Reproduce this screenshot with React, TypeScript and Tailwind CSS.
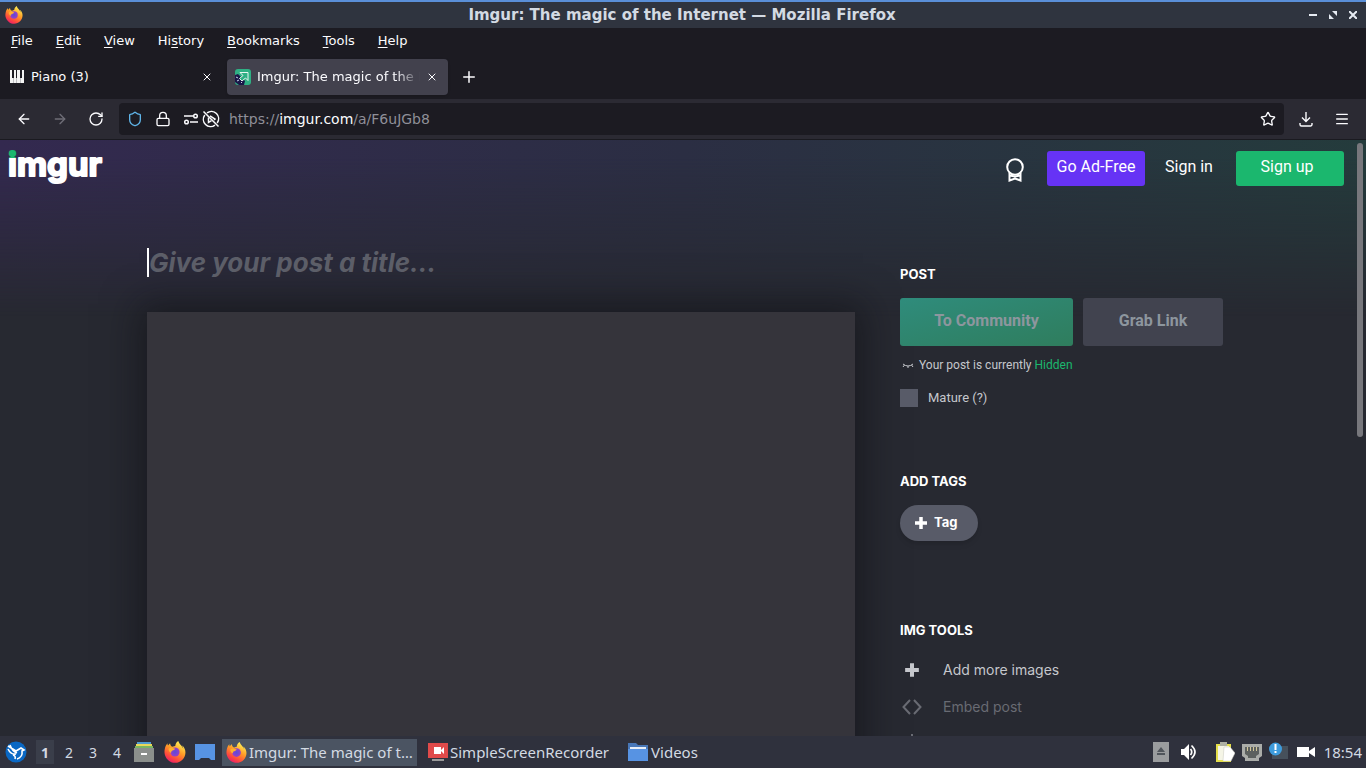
import type { ReactNode } from 'react';
import {
  ArrowLeft,
  ArrowRight,
  Lock,
  Menu,
  Plus,
  RotateCw,
  Shield,
  Star,
  X,
} from 'lucide-react';

const menus = [
  { before: '', key: 'F', after: 'ile' },
  { before: '', key: 'E', after: 'dit' },
  { before: '', key: 'V', after: 'iew' },
  { before: 'Hi', key: 's', after: 'tory' },
  { before: '', key: 'B', after: 'ookmarks' },
  { before: '', key: 'T', after: 'ools' },
  { before: '', key: 'H', after: 'elp' },
];

function FirefoxIcon({ className }: { className: string }) {
  return (
    <svg className={className} viewBox="0 0 24 24" aria-hidden="true">
      <defs>
        <linearGradient id="fox-body" x1="0.8" y1="0" x2="0.25" y2="1">
          <stop offset="0.1" stopColor="#ffe850" />
          <stop offset="0.45" stopColor="#ff9a26" />
          <stop offset="0.75" stopColor="#ff4b3c" />
          <stop offset="1" stopColor="#e8176f" />
        </linearGradient>
        <radialGradient id="fox-globe">
          <stop offset="0" stopColor="#5a4bd8" />
          <stop offset="1" stopColor="#9a3fc4" />
        </radialGradient>
      </defs>
      <path
        fill="url(#fox-body)"
        d="M22.5 8.5c-.6-1.500-1.800-3-2.800-3.500.8 1.500 1.200 2.500 1.300 3.400C19.400 4.500 16.500 3.500 15.600 0c-2.500 1.400-3.200 3.900-3.300 5.400-1 .1-2 .4-2.800.9C8 6 6.800 4.700 6.700 2.600 5.800 3 5 4 4.400 5c-.6-.8-.6-2-.5-2.500C2.300 4 1.300 6.200.9 8.500.3 11.300.4 13.700 1.300 16c1.700 4.600 6 7.800 10.800 7.800 6.300 0 11.300-5 11.300-11.300 0-1.400-.3-2.800-.9-4z"
      />
      <circle cx="12" cy="12" r="5" fill="url(#fox-globe)" />
      <path
        fill="#ffb02e"
        d="M5 8.500c1.500-1.400 3.500-1.500 5-.6 1 .2 2 .2 2.200.6.1.7-1.600 1.200-2 1.700-1.500.3-2.700 1.300-2.500 3C6 12.200 4.800 10.500 5 8.500z"
      />
    </svg>
  );
}

function PianoIcon() {
  return (
    <svg className="h-4 w-4" viewBox="0 0 16 16" aria-hidden="true">
      <path fill="#f4f4f4" d="M1 1h14v13H1z" />
      <path fill="#1c1b22" d="M3 1h2v8H3zM7 1h1v8H7zM11 1h2v8h-2z" />
      <path fill="#8a898f" d="M4 9h.5v5H4zM7.500 9H8v5h-.5zM11.500 9h.5v5h-.5z" />
    </svg>
  );
}

function ImgurFavicon() {
  return (
    <svg className="h-4 w-4" viewBox="0 0 16 16" aria-hidden="true">
      <rect width="16" height="16" rx="3" fill="#2fb084" />
      <path fill="#1a1748" d="M0 6l3-1 7 7-1 4H4l-4-3z" />
      <path fill="#2fb084" stroke="#e8f5f0" d="M5 3.500h8v8L10.500 9 7 12 4.500 9.500 8 6.500z" />
      <path fill="none" stroke="#c9d8e8" d="M1 8l2 1M2 12l2-1M6 14l1-1" />
    </svg>
  );
}

function PermissionsIcon() {
  return (
    <svg className="h-4 w-4" viewBox="0 0 16 16" fill="none" stroke="#fbfbfe" strokeWidth="1.500" aria-hidden="true">
      <path d="M1 5h9M7 11h8" />
      <circle cx="12.500" cy="5" r="1.800" />
      <circle cx="3.500" cy="11" r="1.800" />
    </svg>
  );
}

function AutoplayBlockedIcon() {
  return (
    <svg className="h-[18px] w-[18px]" viewBox="0 0 18 18" fill="none" stroke="#fbfbfe" strokeWidth="1.500" aria-hidden="true">
      <path d="M5 2.800A7.300 7.300 0 0 1 15.200 13M13 15.200A7.300 7.300 0 0 1 2.800 5M1.500 1.500l15 15" />
      <path d="M8 5.800l5 3.200-1 .8M6.500 7.500v5l3-1.800" />
    </svg>
  );
}

function DownloadIcon() {
  return (
    <svg className="h-4 w-4" viewBox="0 0 16 16" fill="none" stroke="#fbfbfe" strokeWidth="1.400" aria-hidden="true">
      <path d="M8 1v9M4 6.500l4 4 4-4M2 12v1.500a1.500 1.500 0 0 0 1.500 1.500h9a1.500 1.500 0 0 0 1.500-1.500V12" />
    </svg>
  );
}

function TitleBar() {
  return (
    <header className="flex h-7 shrink-0 items-center border-t-2 border-[#5a8fd8] bg-[#2f343f] px-1">
      <div className="flex-1 pl-px">
        <FirefoxIcon className="h-[18px] w-[18px]" />
      </div>
      <h1 className="text-center text-[15px] leading-5 font-bold whitespace-nowrap text-[#d3dae3]">
        Imgur: The magic of the Internet — Mozilla Firefox
      </h1>
      <div className="flex flex-1 items-center justify-end gap-2 pr-[3px]">
        <button type="button" aria-label="Minimize" className="flex h-3 w-3 items-center justify-center">
          <svg className="h-2 w-2" viewBox="0 0 8 8"><path fill="#e6ebf2" d="M0 3h8v2H0z" /></svg>
        </button>
        <button type="button" aria-label="Restore" className="flex h-3 w-3 items-center justify-center">
          <svg className="h-2 w-2" viewBox="0 0 8 8"><path fill="#e6ebf2" d="M3 0h5v5zM0 3v5h5z" /></svg>
        </button>
        <button type="button" aria-label="Close window" className="flex h-3 w-3 items-center justify-center">
          <svg className="h-2 w-2" viewBox="0 0 8 8"><path stroke="#e6ebf2" strokeWidth="2" d="M0 0l8 8M8 0L0 8" /></svg>
        </button>
      </div>
    </header>
  );
}

function MenuBar() {
  return (
    <nav aria-label="Application menu" className="flex h-[26px] shrink-0 items-center gap-[23px] px-[11px] text-[13px]">
      {menus.map((m) => (
        <button key={m.after} type="button">
          {m.before}
          <span className="underline underline-offset-2">{m.key}</span>
          {m.after}
        </button>
      ))}
    </nav>
  );
}

function TabStrip() {
  return (
    <div className="flex h-[45px] shrink-0 items-center text-[13px]">
      <div className="flex h-9 w-[223px] items-center gap-1.5 pr-[10px] pl-[9px]">
        <PianoIcon />
        <span className="flex-1">Piano (3)</span>
        <button type="button" aria-label="Close Piano tab">
          <X className="h-3 w-3" strokeWidth={2} />
        </button>
      </div>
      <div className="ml-1 flex h-9 w-[221px] items-center gap-1.5 rounded-sm bg-[#42414d] pr-[10px] pl-2 shadow">
        <ImgurFavicon />
        <span className="flex-1 overflow-hidden mask-r-from-85% whitespace-nowrap">
          Imgur: The magic of the Internet
        </span>
        <button type="button" aria-label="Close Imgur tab">
          <X className="h-3 w-3" strokeWidth={2} />
        </button>
      </div>
      <button type="button" aria-label="New tab" className="ml-3">
        <Plus className="h-[18px] w-[18px]" strokeWidth={2} />
      </button>
    </div>
  );
}

function AddressBar() {
  return (
    <div className="flex h-[41px] shrink-0 items-center border-b border-[#1a1a20] bg-[#2b2a33] px-4">
      <div className="flex w-[103px] items-center gap-5">
        <button type="button" aria-label="Back"><ArrowLeft className="h-4 w-4" /></button>
        <button type="button" aria-label="Forward" className="text-[#6f6e77]"><ArrowRight className="h-4 w-4" /></button>
        <button type="button" aria-label="Reload"><RotateCw className="h-4 w-4" /></button>
      </div>
      <div className="flex h-8 flex-1 items-center rounded bg-[#1c1b22] px-2">
        <Shield className="mr-3 h-4 w-4 text-[#5fb4e8]" strokeWidth={2} />
        <Lock className="mr-3 h-4 w-4" />
        <PermissionsIcon />
        <span className="ml-[3px]"><AutoplayBlockedIcon /></span>
        <a href="https://imgur.com/a/F6uJGb8" className="ml-[9px] flex-1 text-[14px] text-[#8f8f98]">
          https://<span className="text-[#fbfbfe]">imgur.com</span>/a/F6uJGb8
        </a>
        <button type="button" aria-label="Bookmark this page"><Star className="h-4 w-4" /></button>
      </div>
      <button type="button" aria-label="Downloads" className="ml-[14px]"><DownloadIcon /></button>
      <button type="button" aria-label="Open application menu" className="ml-5"><Menu className="h-4 w-4" /></button>
    </div>
  );
}

function ImgurLogo() {
  return (
    <a href="/" aria-label="Imgur home">
      <svg className="h-9 w-[98px] overflow-visible" viewBox="0 0 98 36">
        <defs>
          <linearGradient id="logo-i" gradientUnits="userSpaceOnUse" x1="0" y1="0" x2="0" y2="36">
            <stop offset="0.23" stopColor="#1bb76e" />
            <stop offset="0.23" stopColor="#fff" />
          </linearGradient>
        </defs>
        <text
          x="0"
          y="26"
          fontSize="33"
          fontWeight="700"
          fontFamily="Inter, sans-serif"
          fill="#fff"
          stroke="#fff"
          strokeWidth="2"
          strokeLinejoin="round"
        >
          <tspan fill="url(#logo-i)" stroke="url(#logo-i)">i</tspan>mgur
        </text>
      </svg>
    </a>
  );
}

function SiteHeader() {
  return (
    <div className="flex h-14 items-center justify-between pr-[22px] pl-2">
      <ImgurLogo />
      <div className="flex items-center text-[16px] text-white">
        <button type="button" aria-label="Emerald" className="mt-1 mr-[22px]">
          <svg className="h-6 w-5" viewBox="0 0 20 24" fill="none" stroke="#fff" strokeWidth="2">
            <circle cx="10" cy="9" r="7.800" />
            <path d="M4.500 15v7.500l5.500-2 5.500 2V15M4.500 17.500l5.500 1 5.500-1" />
          </svg>
        </button>
        <a href="/emerald" className="flex h-[35px] w-[98px] items-center justify-center rounded-[3px] bg-[#6633f5] pb-0.5">Go Ad-Free</a>
        <a href="/signin" className="mx-5 w-[51px] pb-0.5 whitespace-nowrap">Sign in</a>
        <a href="/register" className="flex h-[35px] w-[108px] items-center justify-center rounded-[3px] bg-[#1bb76e] pr-1.5 pb-0.5">Sign up</a>
      </div>
    </div>
  );
}

function PlusGlyph({ className }: { className: string }) {
  return (
    <svg className={className} viewBox="0 0 14 14" aria-hidden="true">
      <path stroke="currentColor" strokeWidth="3.500" d="M7 1v12M1 7h12" />
    </svg>
  );
}

function SectionTitle({ children }: { children: ReactNode }) {
  return <h2 className="font-[Inter,sans-serif] text-[13px] leading-4 font-bold text-white">{children}</h2>;
}

function PostSidebar() {
  return (
    <aside className="w-[323px] shrink-0 pt-[70px] text-[#c5c7cc]">
      <SectionTitle>POST</SectionTitle>
      <div className="mt-4 flex gap-2.5 text-[16px] font-bold text-[#8d969e]">
        <button type="button" className="h-12 w-[173px] rounded-[3px] bg-linear-to-br from-[#2f8c7c] to-[#2f7d5d] pb-0.5">To Community</button>
        <button type="button" className="h-12 flex-1 rounded-[3px] bg-[#41434f] pb-0.5">Grab Link</button>
      </div>
      <p className="mt-[11px] flex items-center pl-0.5 text-[12px] leading-4">
        <svg className="mr-[5px] h-3 w-3" viewBox="0 0 12 12" fill="none" stroke="currentColor" aria-hidden="true">
          <path d="M1 5q5 4 10 0M2.500 6L1 8M6 7v2M9.500 6L11 8" />
        </svg>
        <span>Your post is currently <a href="#privacy" className="text-[#1bb76e]">Hidden</a></span>
      </p>
      <label className="mt-4 flex items-center gap-2.5 text-[13px] leading-[18px]">
        <input type="checkbox" className="h-[18px] w-[18px] appearance-none bg-[#585b68]" />
        Mature (?)
      </label>

      <div className="mt-[66px]">
        <SectionTitle>ADD TAGS</SectionTitle>
        <button type="button" className="mt-4 flex h-9 w-[78px] items-center gap-1.5 rounded-full bg-[#585b68] pl-[14px] font-[Inter,sans-serif] text-[13px] font-bold text-white shadow-md">
          <PlusGlyph className="h-[14px] w-[14px]" />
          Tag
        </button>
      </div>

      <div className="mt-[81px]">
        <SectionTitle>IMG TOOLS</SectionTitle>
        <ul className="mt-[13px] font-[Inter,sans-serif] text-[14px]">
          <li>
            <button type="button" className="flex h-[37px] items-center gap-[23px] pl-1">
              <PlusGlyph className="h-4 w-4" />
              Add more images
            </button>
          </li>
          <li>
            <button type="button" className="flex h-[37px] items-center gap-[21px] pl-0.5 text-[#696b73]">
              <svg className="h-4 w-5" viewBox="0 0 20 16" fill="none" stroke="currentColor" strokeWidth="2" aria-hidden="true">
                <path d="M8 1L1.500 8 8 15M12 1l6.500 7-6.500 7" />
              </svg>
              Embed post
            </button>
          </li>
          <li>
            <button type="button" aria-label="Download post" className="flex h-[37px] items-center pl-1 text-[#696b73]">
              <svg className="h-5 w-4" viewBox="0 0 16 20" fill="none" stroke="currentColor" strokeWidth="2">
                <path d="M8 0v13M3 8l5 5 5-5M1 18h14" />
              </svg>
            </button>
          </li>
        </ul>
      </div>
    </aside>
  );
}

function WebPage() {
  return (
    <div className="relative min-h-0 flex-1 overflow-hidden bg-[#272931] font-[Roboto,sans-serif]">
      <div className="absolute inset-x-0 top-0 h-44 bg-linear-to-r from-[#33294f] via-[#2b2e43] to-[#243b3c] mask-b-from-10%" />
      <div className="relative h-full">
        <SiteHeader />
        <div className="flex justify-center pl-1">
          <main className="flex max-w-[1076px] flex-1 gap-[45px]">
            <section className="min-w-0 flex-1 pt-[52px]">
              <input
                type="text"
                aria-label="Post title"
                placeholder="Give your post a title..."
                className="block h-[29px] w-full border-l-2 border-white font-[Inter,sans-serif] text-[26px] font-bold italic outline-none placeholder:text-[#5c5e68]"
              />
              <div className="mt-[35px] h-[640px] bg-[#35343b] shadow-[0_0_34px_8px_rgba(12,12,16,0.5)]" />
            </section>
            <PostSidebar />
          </main>
        </div>
      </div>
      <div className="absolute top-[3px] right-[3px] h-[294px] w-1.5 rounded-full bg-[#77777c]" />
    </div>
  );
}

function TrayIcons() {
  return (
    <div className="flex items-center" aria-hidden="true">
      <svg className="h-5 w-4" viewBox="0 0 16 20">
        <path fill="#9a9c9e" d="M0 0h16v20H0z" />
        <path fill="#50555b" d="M8 5l4 5H4zM4 11h8v2H4z" />
      </svg>
      <svg className="ml-3 h-4 w-4" viewBox="0 0 16 16">
        <path fill="#fff" d="M0 5h3l5-5v16l-5-5H0z" />
        <path fill="none" stroke="#fff" strokeWidth="1.700" d="M9.500 5q2.500 3 0 6M10.500 1.500q7 6.500 0 13" />
      </svg>
      <svg className="ml-[18px] h-[22px] w-5" viewBox="0 0 20 22">
        <path fill="#e5df4b" d="M1 3h15v18H1z" />
        <path fill="#f5f5e6" d="M3 5h11v14H3z" />
        <path fill="#aeb0a4" d="M5 1h7v4H5z" />
        <path fill="#fff" stroke="#c8c9be" strokeWidth="0.500" d="M9 6h6l5 6-4 8H8z" />
      </svg>
      <svg className="ml-[7px] h-5 w-5" viewBox="0 0 20 20">
        <path fill="#aaaca9" d="M0 2h20v12l-3 2v3H3v-3l-3-2z" />
        <path fill="#5c605f" d="M3 5h14v7l-3 2v2H6v-2l-3-2z" />
        <path stroke="#d1c59a" strokeWidth="1" d="M5.500 5v4M8.500 5v4M11.500 5v4M14.500 5v4" />
      </svg>
      <svg className="ml-[7px] h-5 w-5" viewBox="0 0 20 20">
        <path fill="#46505b" d="M3 4h16v13H3z" />
        <circle cx="6.500" cy="7" r="6.500" fill="#3e9cdd" />
        <path fill="#fff" d="M5.500 2h2v6h-2zM5.500 9h2v2h-2z" />
      </svg>
      <svg className="ml-2 h-3 w-[18px]" viewBox="0 0 18 12">
        <path fill="#fff" d="M0 1h12v10H0zM12 5l6-4v10l-6-4z" />
      </svg>
    </div>
  );
}

function Taskbar() {
  return (
    <footer className="flex h-8 shrink-0 items-center bg-[#2f313d] pr-1 pl-[5px] font-['Noto_Sans',sans-serif] text-[15px] text-[#d3dae3]">
      <button type="button" aria-label="Start menu">
        <svg className="h-[22px] w-[22px]" viewBox="0 0 22 22">
          <circle cx="11" cy="11" r="10.500" fill="#0a68c4" />
          <path fill="none" stroke="#fff" strokeWidth="1.600" d="M3 5l8 5 5-3 3 2-2 1q1 6-5 8M3 8q3 6 8 5M5 4q2 6 7 8M8 14q3 1 2 4" />
        </svg>
      </button>
      <nav aria-label="Desktops" className="ml-[9px] flex text-[14px]">
        <button type="button" className="h-6 w-[18px] bg-[#3a3e4a] font-bold">1</button>
        <button type="button" className="ml-1.5 h-6 w-[18px]">2</button>
        <button type="button" className="ml-1.5 h-6 w-[18px]">3</button>
        <button type="button" className="ml-1.5 h-6 w-[18px]">4</button>
      </nav>
      <button type="button" aria-label="File manager" className="ml-2">
        <svg className="h-5 w-5" viewBox="0 0 20 20">
          <path fill="#4f9bd0" d="M3 0h14v3H3z" />
          <path fill="#e8d85a" d="M2 2h16v3H2z" />
          <path fill="#79b562" d="M1 4h18v3H1z" />
          <path fill="#8b8f8c" d="M0 6h20v14H0z" />
          <path fill="#fff" d="M7 11h6v2H7z" />
        </svg>
      </button>
      <button type="button" aria-label="Firefox" className="ml-[10px]"><FirefoxIcon className="h-[22px] w-[22px]" /></button>
      <button type="button" aria-label="Show desktop" className="ml-[9px]">
        <svg className="h-4 w-5" viewBox="0 0 20 16"><path fill="#5793e3" d="M0 0h20v16h-4l-2-2H6l-2 2H0z" /></svg>
      </button>
      <button type="button" className="ml-[7px] flex h-[27px] w-[195px] items-center bg-[#4b5462] pl-1 whitespace-nowrap">
        <FirefoxIcon className="h-[21px] w-[21px] shrink-0" />
        <span className="ml-0.5">Imgur: The magic of t…</span>
      </button>
      <button type="button" className="ml-[11px] flex items-center gap-0.5">
        <svg className="h-5 w-5" viewBox="0 0 20 20">
          <path fill="#e04a4a" d="M0 1h20v15H0z" />
          <path fill="#fff" d="M6 5h7v7H6zM13 8l3-3v7l-3-3z" />
          <path fill="#9a9a9a" d="M4 17h12v2H4z" />
        </svg>
        SimpleScreenRecorder
      </button>
      <button type="button" className="ml-[19px] flex items-center gap-[3px]">
        <svg className="h-[18px] w-5" viewBox="0 0 20 18">
          <path fill="#4877b8" d="M0 0h8l2 2h10v5H0z" />
          <path fill="#e8eef7" d="M2 4h16v3H2z" />
          <path fill="#5793e3" d="M0 6h20v12H0z" />
        </svg>
        Videos
      </button>
      <div className="ml-auto flex items-center gap-[9px]">
        <TrayIcons />
        <time>18:54</time>
      </div>
    </footer>
  );
}

export default function App() {
  return (
    <div className="flex h-screen flex-col overflow-hidden bg-[#1c1b22] font-['DejaVu_Sans',sans-serif] text-[#fbfbfe]">
      <TitleBar />
      <MenuBar />
      <TabStrip />
      <AddressBar />
      <WebPage />
      <Taskbar />
    </div>
  );
}
